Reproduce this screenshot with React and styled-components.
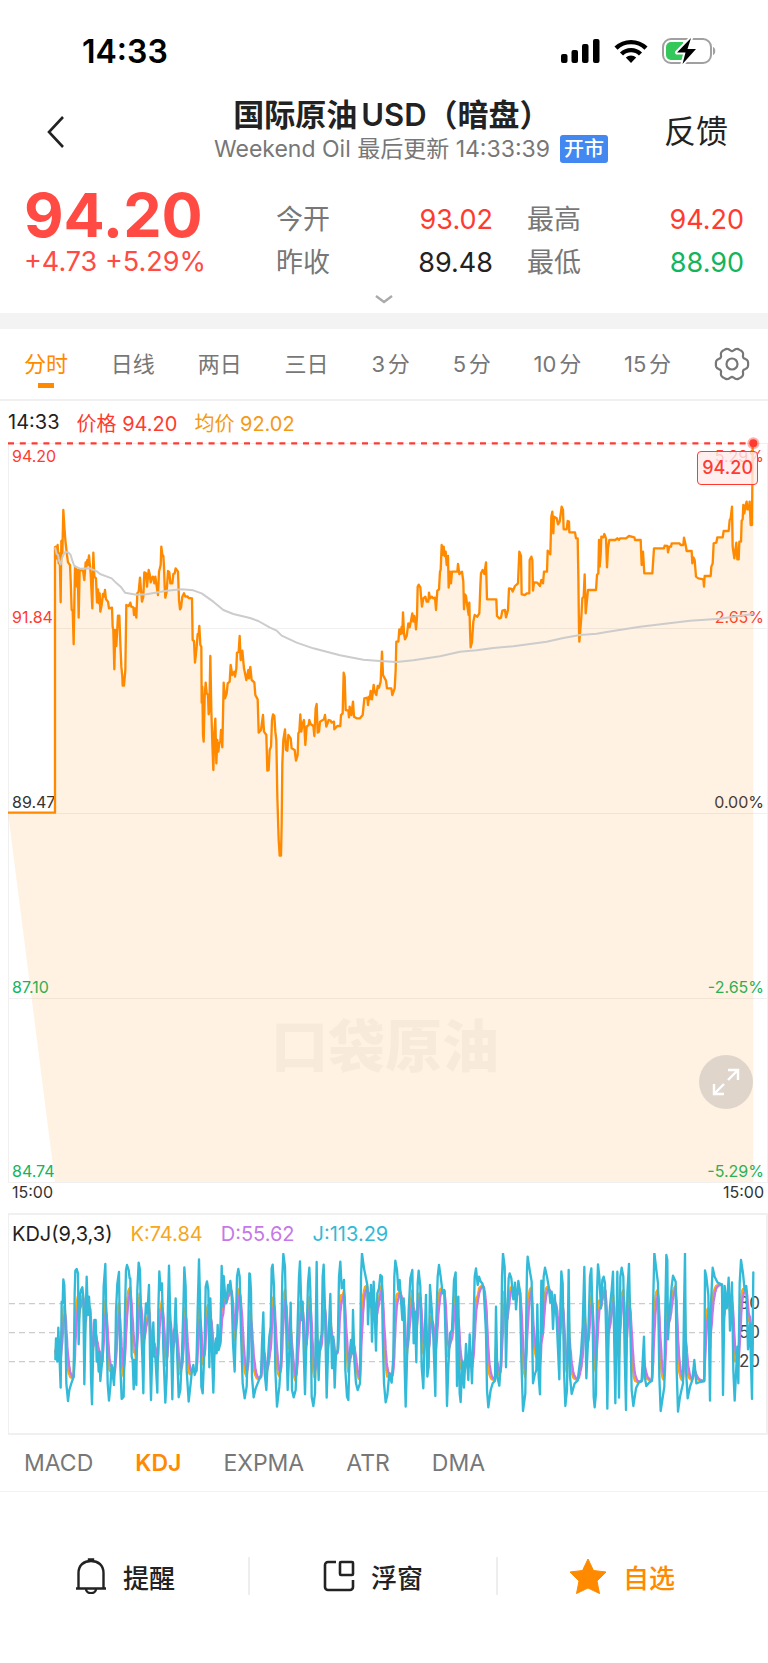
import React from "react";
import styled, { createGlobalStyle } from "styled-components";

const GlobalStyle = createGlobalStyle`
  * {
    box-sizing: border-box;
  }
  body {
    margin: 0;
    background: #fff;
    color: #222;
    font-family: Inter, "Noto Sans CJK SC", sans-serif;
    text-autospace: normal;
  }
  button {
    padding: 0;
    border: none;
    background: none;
    color: inherit;
    font: inherit;
    cursor: pointer;
  }
  svg {
    display: block;
  }
`;

const COLORS = {
  red: "#ff3b30",
  price: "#ff4b44",
  green: "#12b45c",
  orange: "#ff8a00",
  gray: "#777",
  dark: "#222",
};

const Page = styled.div`
  display: flex;
  flex-direction: column;
`;

const StatusBar = styled.div`
  display: flex;
  align-items: center;
  justify-content: space-between;
  height: 98px;
  padding: 4px 52px 0 82px;
  color: #000;
  font-size: 32px;
  font-weight: 600;
`;

const StatusIcons = styled.div`
  display: flex;
  align-items: center;
  gap: 14px;
`;

const Header = styled.header`
  display: grid;
  grid-template-columns: 1fr auto 1fr;
  align-items: center;
  padding: 0 40px 8px;
`;

const BackButton = styled.button`
  justify-self: start;
  padding: 4px;
`;

const Feedback = styled.button`
  justify-self: end;
  font-size: 32px;
  line-height: 40px;
`;

const Heading = styled.div`
  display: flex;
  flex-direction: column;
  align-items: center;
`;

const Title = styled.h1`
  margin: 0;
  padding-left: 16px;
  font-size: 31px;
  font-weight: 600;
  line-height: 34px;
  white-space: nowrap;
`;

const Subtitle = styled.div`
  display: flex;
  align-items: center;
  gap: 10px;
  padding-left: 54px;
  color: ${COLORS.gray};
  font-size: 23px;
  line-height: 34px;
  white-space: nowrap;
`;

const Badge = styled.span`
  padding: 0 4px;
  border-radius: 3px;
  background: #4288f0;
  color: #fff;
  font-size: 20px;
  font-weight: 500;
  line-height: 28px;
`;

const Quote = styled.section`
  display: grid;
  grid-template-columns: 218px 1fr 1fr;
  column-gap: 34px;
  padding: 14px 24px 0;
`;

const Current = styled.div`
  color: ${COLORS.price};
  white-space: nowrap;
`;

const BigPrice = styled.div`
  font-size: 61px;
  font-weight: 700;
  line-height: 54px;
`;

const Change = styled.div`
  font-size: 27px;
  line-height: 40px;
`;

const Stats = styled.dl`
  margin: 10px 0 0;
`;

const Stat = styled.div`
  display: flex;
  justify-content: space-between;
  font-size: 27px;
  line-height: 43px;

  dt {
    color: ${COLORS.gray};
  }
  dd {
    margin: 0;
    color: ${(props) => props.$color};
  }
`;

const MoreButton = styled.button`
  display: flex;
  align-items: center;
  justify-content: center;
  height: 29px;
`;

const Band = styled.div`
  height: 16px;
  background: #f3f3f3;
`;

const Tabs = styled.nav`
  display: flex;
  justify-content: space-between;
  align-items: center;
  height: 72px;
  padding: 0 18px 0 24px;
  border-bottom: 2px solid #f0f0f0;
`;

const Tab = styled.button`
  display: flex;
  flex-direction: column;
  align-items: center;
  color: ${(props) => (props.$active ? COLORS.orange : COLORS.gray)};
  font-size: 22px;
  line-height: 30px;
  white-space: nowrap;

  &::after {
    content: "";
    width: 16px;
    height: 5px;
    margin: 4px 0 -9px;
    background: ${(props) => (props.$active ? COLORS.orange : "transparent")};
  }
`;

const Legend = styled.div`
  display: flex;
  align-items: center;
  gap: 17px;
  height: 42px;
  padding: 0 8px;
  font-size: 20px;
`;

const Value = styled.span`
  color: ${(props) => props.$color};
`;

const Plot = styled.div`
  display: grid;
  height: 740px;
  margin-left: 8px;

  > * {
    grid-area: 1 / 1;
    min-width: 0;
    min-height: 0;
  }
`;

const Curve = styled.svg`
  width: 100%;
  height: 100%;
`;

const Scale = styled.div`
  display: grid;
  grid-template-rows: repeat(4, 1fr);
`;

const ScaleRow = styled.div`
  display: flex;
  flex-direction: column;
  justify-content: flex-end;
  padding: 2px 3px 1px;
  border: 1px solid #f0f0f0;
  border-bottom: none;

  &:last-child {
    border-bottom: 1px solid #f0f0f0;
  }
`;

const Pair = styled.div`
  display: flex;
  justify-content: space-between;
  color: ${(props) => props.$color};
  font-size: 16px;
  line-height: 20px;

  &:not(:last-child) {
    margin-bottom: auto;
  }
`;

const Watermark = styled.div`
  align-self: end;
  justify-self: center;
  margin: 0 6px 100px 0;
  color: rgba(0, 0, 0, 0.03);
  font-size: 57px;
  font-weight: 900;
  line-height: 72px;
`;

const PriceTag = styled.div`
  justify-self: end;
  align-self: start;
  margin: 8px 10px 0 0;
  padding: 0 4px;
  border: 1px solid ${COLORS.red};
  border-radius: 4px;
  background: rgba(255, 235, 235, 0.8);
  color: ${COLORS.red};
  font-size: 18px;
  font-weight: 500;
  line-height: 32px;
`;

const ExpandButton = styled.button`
  display: flex;
  align-items: center;
  justify-content: center;
  align-self: end;
  justify-self: end;
  width: 54px;
  height: 54px;
  margin: 0 15px 74px 0;
  border-radius: 50%;
  background: #e0d5cb;
`;

const TimeAxis = styled.div`
  display: flex;
  justify-content: space-between;
  height: 30px;
  padding: 0 4px 0 12px;
  color: #333;
  font-size: 16px;
  line-height: 18px;
`;

const Indicator = styled.section`
  margin-left: 8px;
  border: 2px solid #f0f0f0;
  border-left-width: 1px;
`;

const IndicatorLegend = styled(Legend)`
  height: 38px;
  padding: 0 3px;
  gap: 18px;
`;

const IndicatorPlot = styled.div`
  display: grid;
  height: 180px;

  > * {
    grid-area: 1 / 1;
    min-height: 0;
  }
`;

const Levels = styled.div`
  display: flex;
  flex-direction: column;
  align-items: flex-end;
  padding: 36px 6px 0 0;
  color: #444;
  font-size: 17px;
  line-height: 29px;
`;

const IndicatorTabs = styled.nav`
  display: flex;
  align-items: center;
  gap: 42px;
  height: 57px;
  padding: 0 24px;
  border-bottom: 1px solid #f3f3f3;
`;

const IndicatorTab = styled.button`
  color: ${(props) => (props.$active ? COLORS.orange : COLORS.gray)};
  font-size: 23px;
  font-weight: ${(props) => (props.$active ? 600 : 400)};
`;

const Actions = styled.footer`
  display: grid;
  grid-template-columns: repeat(3, 1fr);
  padding: 65px 22px 66px 2px;
`;

const Action = styled.button`
  display: flex;
  align-items: center;
  justify-content: center;
  gap: 16px;
  height: 38px;
  color: ${(props) => (props.$starred ? COLORS.orange : COLORS.dark)};
  font-size: 26px;
  font-weight: 500;

  &:not(:last-child) {
    border-right: 2px solid #eee;
  }
`;

// Both charts are stored in a grid of three units per pixel.
const PRICE = `24,1148 165,1148 165,351 168,350 170,385 173,345 176,400 179,370 182,517 184,333 187,370 190,240
193,290 196,330 199,357 201,375 204,397 210,405 212,450 215,540 218,540 221,643 223,520 225,410 229,420 231,470
233,420 236,563 239,420 249,422 253,450 257,397 259,410 262,390 264,405 267,376 270,410 272,430 277,535 280,368
283,440 288,445 291,517 294,478 297,520 299,490 301,545 305,525 309,492 312,500 315,480 318,508 324,515 327,535
336,533 338,590 340,600 343,718 346,600 349,648 354,557 358,557 361,640 364,710 367,740 368,767 372,767 376,720
379,525 386,528 391,518 394,530 400,532 402,555 405,535 409,563 412,490 416,485 420,443 423,480 426,515 430,500
433,427 438,430 441,470 446,420 449,432 452,457 458,440 461,443 463,460 466,440 469,462 474,495 477,425 482,405
484,350 487,375 490,377 492,410 494,470 496,503 500,485 504,423 508,427 511,460 517,460 520,432 524,430 527,415
534,425 537,510 540,538 543,533 547,500 552,490 556,500 562,499 566,504 576,505 578,630 582,633 585,698 590,650
593,612 596,610 598,588 601,645 604,650 605,818 607,770 609,915 611,935 614,800 617,758 620,790 624,795 626,853
628,840 631,678 634,840 637,940 640,1020 643,910 646,866 649,1000 652,930 655,965 658,940 661,935 663,900
667,952 671,758 675,805 680,790 683,760 689,755 692,705 697,735 703,725 705,740 709,715 711,668 716,665 719,618
722,690 727,662 732,715 739,750 745,720 747,745 751,711 755,750 763,757 766,795 773,808 776,908 783,900 789,855
792,905 799,915 802,1022 806,1020 809,960 813,950 816,870 819,853 823,858 826,905 829,930 832,1100 836,1230
839,1277 843,1277 845,1180 847,1000 850,930 855,898 858,960 862,962 865,915 872,925 875,955 884,960 888,992
893,975 895,910 898,905 901,853 904,905 908,880 912,870 916,945 920,890 926,885 928,870 932,882 940,888 943,918
947,835 950,822 953,908 957,905 960,875 972,868 975,855 979,890 986,870 992,872 995,878 1002,875 1003,898
1012,888 1021,888 1023,855 1028,850 1031,728 1034,740 1037,840 1045,842 1047,862 1049,830 1054,855 1059,815
1062,860 1070,865 1080,865 1088,855 1090,835 1093,805 1102,803 1104,825 1107,800 1109,808 1112,783 1116,808
1121,765 1124,785 1129,795 1133,768 1137,773 1142,755 1144,710 1146,665 1149,735 1158,752 1161,775 1174,775
1177,795 1184,775 1187,720 1189,635 1195,635 1198,598 1202,612 1205,590 1207,610 1209,547 1212,610 1215,628
1220,618 1225,580 1229,592 1233,572 1237,550 1240,575 1243,558 1246,575 1248,598 1251,560 1253,470 1256,464
1261,472 1264,510 1266,530 1270,505 1276,500 1280,515 1285,515 1287,488 1290,505 1295,500 1300,505 1305,503
1308,540 1312,482 1317,478 1320,425 1322,420 1325,345 1328,375 1331,350 1334,378 1337,365 1340,405 1344,378
1346,473 1350,425 1353,460 1356,425 1372,425 1374,402 1378,432 1386,425 1390,455 1392,538 1395,493 1398,498
1402,530 1406,555 1408,518 1410,600 1412,652 1416,635 1420,575 1424,555 1432,560 1438,550 1441,470 1443,430
1448,420 1453,432 1458,397 1461,508 1489,508 1491,558 1498,565 1503,563 1507,542 1515,540 1518,562 1524,540
1527,475 1535,477 1538,485 1545,468 1554,460 1558,365 1563,378 1565,493 1575,495 1580,490 1588,490 1589,390
1594,380 1597,390 1599,482 1602,457 1612,458 1620,468 1624,450 1629,460 1632,425 1641,425 1643,362 1651,373
1654,260 1657,245 1660,310 1662,260 1670,265 1674,283 1679,275 1685,230 1689,240 1691,298 1700,298 1703,273
1707,275 1708,307 1725,307 1728,325 1733,325 1735,435 1737,600 1738,635 1741,600 1744,560 1747,505 1751,500
1754,433 1757,550 1761,510 1764,480 1788,480 1791,435 1795,430 1797,330 1799,410 1802,375 1804,320 1810,322
1813,312 1818,325 1821,412 1824,355 1828,330 1846,330 1852,325 1857,330 1860,325 1878,325 1887,318 1903,322
1905,330 1922,330 1925,405 1929,365 1933,430 1957,430 1962,355 1992,355 1994,347 2002,348 2004,367 2008,350
2013,350 2015,340 2038,340 2042,345 2050,345 2052,323 2057,345 2060,363 2075,363 2077,400 2080,382 2084,390
2088,440 2095,445 2110,448 2112,470 2114,438 2132,438 2134,410 2138,400 2141,340 2149,338 2152,322 2168,322
2171,303 2186,303 2189,270 2192,265 2196,230 2198,350 2203,385 2209,338 2212,388 2216,388 2218,335 2223,335
2225,272 2228,268 2230,225 2233,250 2236,230 2240,215 2242,238 2246,238 2249,215 2252,285 2256,285 2258,40`;

const AVERAGE = `165,352 170,372 174,375 178,395 182,403 187,382 194,367 205,367 212,375 218,395 223,408 240,416
270,415 290,424 300,432 335,445 350,460 362,470 375,488 410,494 440,493 500,482 545,478 580,481 605,490 640,515
670,540 700,552 750,564 775,573 810,593 830,602 845,617 890,638 940,655 1020,676 1090,689 1140,693 1190,696
1240,691 1320,679 1380,665 1430,661 1480,654 1540,649 1640,635 1690,624 1740,615 1790,611 1820,606 1920,590
2020,578 2070,572 2160,566 2220,557 2260,552`;

const J_LINE = `166,448 168,385 172,455 175,353 178,430 182,533 185,275 188,280 190,208 193,225 196,330 199,520
204,573 208,540 214,520 221,500 224,250 226,182 230,177 234,190 236,403 240,260 243,240 247,232 250,260 253,523
257,320 260,200 264,315 267,260 271,330 273,500 276,583 280,400 283,330 287,330 290,455 293,425 296,485 298,425
301,513 305,470 307,455 311,230 316,162 320,370 323,520 327,572 331,530 335,465 342,525 346,430 348,303 352,221
357,186 361,470 365,567 371,560 375,300 378,180 381,165 386,180 389,205 391,205 395,440 398,450 401,538 404,450
409,525 412,240 416,158 420,180 424,370 427,440 430,550 433,370 438,280 442,310 447,225 450,440 453,570 457,420
460,337 463,440 466,440 472,548 475,300 478,184 482,240 486,220 490,420 496,578 500,500 504,280 507,167 511,330
514,430 517,568 521,370 524,350 527,265 531,420 536,562 541,540 546,430 550,300 553,172 557,230 560,480 566,575
572,520 576,480 580,465 584,495 589,480 593,300 597,148 601,300 604,530 608,550 614,400 617,230 621,214 625,240
628,472 631,265 636,430 640,548 644,410 648,385 650,430 653,345 656,420 660,405 663,280 665,168 669,290 671,198
675,250 679,280 684,225 687,245 691,213 695,250 699,400 704,485 708,330 711,200 715,177 719,200 723,370 728,520
734,565 740,530 744,400 748,190 750,192 753,245 756,500 761,562 767,535 775,515 783,495 786,400 790,307 794,490
799,540 803,460 808,380 812,350 815,175 818,164 822,230 826,480 831,590 838,530 843,450 847,200 850,132 855,170
859,370 863,540 868,420 872,278 876,540 881,562 887,540 893,340 897,200 900,154 905,330 908,275 911,420 915,553
919,400 924,220 928,173 931,240 935,560 940,588 945,550 948,300 950,156 953,420 956,510 960,400 965,370 968,200
971,164 975,300 980,563 985,400 991,252 996,475 1000,380 1004,533 1008,430 1013,420 1017,200 1021,155 1025,235
1029,230 1032,210 1036,480 1041,560 1045,570 1049,430 1053,390 1057,430 1059,300 1063,450 1068,520 1073,540
1080,520 1083,200 1086,130 1092,175 1098,205 1102,225 1104,343 1108,250 1110,290 1113,225 1116,395 1121,215
1128,422 1132,250 1137,235 1141,195 1146,200 1148,370 1152,520 1157,577 1162,555 1168,490 1175,518 1180,440
1183,200 1186,152 1191,180 1195,240 1199,210 1203,270 1207,330 1211,265 1214,470 1217,590 1221,450 1226,300
1231,205 1237,180 1241,400 1245,305 1249,457 1253,220 1256,182 1261,230 1265,470 1270,535 1274,380 1278,255
1282,500 1286,470 1290,225 1295,295 1300,380 1306,558 1309,330 1313,200 1317,165 1322,200 1328,250 1333,240
1338,440 1341,588 1345,470 1350,370 1356,360 1362,210 1367,187 1371,528 1375,260 1379,550 1382,576 1387,455
1392,533 1398,402 1405,510 1409,373 1416,520 1420,380 1424,200 1428,175 1433,225 1437,200 1442,215 1447,220
1451,235 1455,310 1458,370 1461,540 1465,592 1472,540 1478,520 1485,512 1488,290 1492,500 1498,527 1503,450
1506,200 1509,130 1514,170 1518,472 1522,310 1526,205 1529,190 1534,205 1540,268 1545,218 1548,298 1555,213
1560,245 1564,450 1569,603 1576,550 1579,300 1581,180 1583,140 1589,180 1595,215 1597,400 1599,520 1604,495
1609,480 1612,283 1616,500 1620,553 1624,212 1627,370 1631,200 1635,173 1641,200 1647,235 1651,278 1655,245
1659,357 1664,255 1670,330 1678,508 1681,300 1684,184 1688,220 1692,480 1696,588 1701,540 1706,180 1710,500
1715,552 1724,520 1733,512 1737,480 1743,430 1748,350 1753,171 1759,505 1765,370 1770,200 1774,175 1778,330
1781,560 1784,592 1788,550 1791,250 1794,163 1798,200 1803,295 1807,210 1811,200 1815,220 1819,400 1822,596
1826,350 1830,290 1835,240 1839,185 1846,580 1852,185 1857,563 1861,200 1865,173 1870,200 1874,430 1878,600
1882,250 1887,162 1891,350 1895,540 1900,588 1908,535 1916,518 1925,512 1932,380 1935,505 1939,528 1947,518
1956,512 1959,300 1963,128 1969,180 1974,220 1978,500 1982,603 1993,530 1996,300 1999,135 2002,150 2004,388
2009,300 2015,230 2019,197 2027,215 2030,480 2034,605 2040,560 2049,520 2052,300 2055,130 2058,480 2063,565
2070,530 2077,510 2083,450 2089,520 2100,516 2113,513 2115,181 2119,200 2125,255 2130,572 2133,280 2138,173
2144,200 2153,218 2166,224 2169,555 2174,228 2180,295 2186,203 2190,362 2196,217 2200,480 2204,572 2212,410
2215,520 2219,220 2223,150 2229,190 2234,240 2239,228 2244,418 2250,340 2253,460 2256,567 2260,187`;

// J = 3K - 2D and D is a 3-period smoothing of K, so both follow from J.
// One step is one minute of the 24 hour axis.
const smoothLines = (line) => {
  const points = line.split(/\s+/).map((pair) => pair.split(",").map(Number));
  const k = [];
  const d = [];
  let lastD = 420;
  let i = 0;
  for (let x = points[0][0]; x <= 2260; x += 2280 / 1440) {
    while (i < points.length - 2 && points[i + 1][0] < x) i += 1;
    const [x0, y0] = points[i];
    const [x1, y1] = points[i + 1];
    const j = y0 + ((y1 - y0) * (x - x0)) / (x1 - x0);
    const valueK = (3 * j + 4 * lastD) / 7;
    lastD = (2 * lastD + valueK) / 3;
    k.push(`${Math.round(x)},${Math.round(valueK)}`);
    d.push(`${Math.round(x)},${Math.round(lastD)}`);
  }
  return { k: k.join(" "), d: d.join(" ") };
};

const KD = smoothLines(J_LINE);

const GEAR = Array.from({ length: 72 }, (_, i) => {
  const angle = (i * Math.PI) / 36;
  const r = 15 + 1.6 * Math.cos(6 * angle) - 0.5 * Math.cos(12 * angle);
  return `${(18 + r * Math.cos(angle)).toFixed(1)},${(18 + r * Math.sin(angle)).toFixed(1)}`;
}).join(" ");

const PERIODS = ["分时", "日线", "两日", "三日", "3分", "5分", "10分", "15分"];
const INDICATORS = ["MACD", "KDJ", "EXPMA", "ATR", "DMA"];

const SignalIcon = () => (
  <svg width="39" height="24" viewBox="0 0 39 24">
    <rect x="0" y="15" width="6.500" height="9" rx="2" />
    <rect x="10.500" y="11" width="6.500" height="13" rx="2" />
    <rect x="21" y="5" width="6.500" height="19" rx="2" />
    <rect x="32" y="0" width="6.500" height="24" rx="2" />
  </svg>
);

const WifiIcon = () => (
  <svg width="34" height="24" viewBox="0 0 34 24" fill="none" stroke="#000" strokeWidth="4.400">
    <path d="M2 9.200a21.500 21.500 0 0 1 30 0" />
    <path d="M7.500 15a13.500 13.500 0 0 1 19 0" />
    <path d="M17 24l-5.200-5.400a7.500 7.500 0 0 1 10.400 0z" fill="#000" stroke="none" />
  </svg>
);

const BatteryIcon = () => (
  <svg width="54" height="28" viewBox="0 0 54 28">
    <rect x="1" y="2" width="48" height="24" rx="8" fill="#fff" stroke="#a0a0a0" strokeWidth="2" />
    <path d="M9 5h12v18H9a5 5 0 0 1-5-5v-8a5 5 0 0 1 5-5z" fill="#34c759" />
    <path d="M51 10c3 1 3 7 0 8z" fill="#a0a0a0" />
    <path
      d="M29 1L15 15.500h8.500L20.500 27 34 12h-8.500z"
      fill="#000"
      stroke="#fff"
      strokeWidth="4"
      paintOrder="stroke"
      strokeLinejoin="round"
    />
  </svg>
);

const BellIcon = () => (
  <svg width="32" height="36" viewBox="0 0 32 36" fill="none" stroke="#222" strokeWidth="2.400">
    <path d="M3.500 30V15C3.500 7 9 3 16 3s12.500 4 12.500 12v15" />
    <path d="M1 30.500h30M11 31c0 5.500 10 5.500 10 0" />
    <path d="M14 3.500V1.500h4v2" />
  </svg>
);

const FloatIcon = () => (
  <svg width="32" height="32" viewBox="0 0 32 32" fill="none" stroke="#222" strokeWidth="2.600">
    <path d="M13 2H5a3 3 0 0 0-3 3v22a3 3 0 0 0 3 3h22a3 3 0 0 0 3-3v-7" />
    <rect x="17" y="2" width="13" height="13" rx="1" />
  </svg>
);

const StarIcon = () => (
  <svg width="38" height="36" viewBox="0 0 38 36">
    <path
      d="M19 1l5.500 11.500L37 14l-9 9 2.500 12.500L19 30 7.500 35.500 10 23 1 14l12.500-1.500z"
      fill="#ff8a00"
      stroke="#ff8a00"
      strokeLinejoin="round"
    />
  </svg>
);

const PriceChart = () => (
  <Plot>
    <Scale>
      <ScaleRow>
        <Pair $color={COLORS.red}>
          <span>94.20</span>
          <span>5.29%</span>
        </Pair>
        <Pair $color={COLORS.red}>
          <span>91.84</span>
          <span>2.65%</span>
        </Pair>
      </ScaleRow>
      <ScaleRow>
        <Pair $color="#333">
          <span>89.47</span>
          <span>0.00%</span>
        </Pair>
      </ScaleRow>
      <ScaleRow>
        <Pair $color={COLORS.green}>
          <span>87.10</span>
          <span>-2.65%</span>
        </Pair>
      </ScaleRow>
      <ScaleRow>
        <Pair $color={COLORS.green}>
          <span>84.74</span>
          <span>-5.29%</span>
        </Pair>
      </ScaleRow>
    </Scale>
    <Watermark>口袋原油</Watermark>
    <Curve viewBox="24 39 2280 2220" preserveAspectRatio="none" overflow="visible" fill="none" strokeLinejoin="round">
      <polygon points={`${PRICE} 2260,40 2260,2256 165,2256`} fill="#ff8a00" fillOpacity="0.11" />
      <polyline points={PRICE} stroke="#ff8a00" strokeWidth="7" />
      <polyline points={AVERAGE} stroke="#ccc" strokeWidth="6" />
      <path d="M24 40H2256" stroke="#ff3b30" strokeWidth="7" strokeDasharray="18 17.400" />
      <circle cx="2260" cy="40" r="18" fill="#ff3b30" fillOpacity="0.4" />
      <circle cx="2260" cy="40" r="12" fill="#ff3b30" />
    </Curve>
    <PriceTag>94.20</PriceTag>
    <ExpandButton aria-label="全屏">
      <svg width="28" height="28" viewBox="0 0 28 28" fill="none" stroke="#fff" strokeWidth="2.400">
        <path d="M16 2h10v10M26 2L16 12M12 26H2V16M2 26l10-10" />
      </svg>
    </ExpandButton>
  </Plot>
);

const KdjChart = () => (
  <Indicator>
    <IndicatorLegend>
      <span>KDJ(9,3,3)</span>
      <Value $color="#f5a623">K:74.84</Value>
      <Value $color="#c678e8">D:55.62</Value>
      <Value $color="#32b9d5">J:113.29</Value>
    </IndicatorLegend>
    <IndicatorPlot>
      <Levels>
        <span>80</span>
        <span>50</span>
        <span>20</span>
      </Levels>
      <Curve
        viewBox="27 129 2271 540"
        preserveAspectRatio="none"
        fill="none"
        strokeLinejoin="round"
        strokeLinecap="round"
      >
        <path
          d="M27 281H2160M27 368H2160M27 455H2160"
          stroke="#ccc"
          strokeWidth="4"
          strokeDasharray="18 12"
          strokeLinecap="butt"
        />
        <polyline points={KD.k} stroke="#ffa510" strokeWidth="7" />
        <polyline points={KD.d} stroke="#c678e8" strokeWidth="7" />
        <polyline points={J_LINE} stroke="#32bad8" strokeWidth="7" />
      </Curve>
    </IndicatorPlot>
  </Indicator>
);

const App = () => {
  return (
    <Page>
      <GlobalStyle />
      <StatusBar>
        <span>14:33</span>
        <StatusIcons>
          <SignalIcon />
          <WifiIcon />
          <BatteryIcon />
        </StatusIcons>
      </StatusBar>
      <Header>
        <BackButton aria-label="返回">
          <svg width="24" height="34" viewBox="0 0 24 34" fill="none" stroke="#222" strokeWidth="2.600">
            <path d="M19 2L5 17l14 15" />
          </svg>
        </BackButton>
        <Heading>
          <Title>国际原油USD（暗盘）</Title>
          <Subtitle>
            Weekend Oil 最后更新 14:33:39
            <Badge>开市</Badge>
          </Subtitle>
        </Heading>
        <Feedback>反馈</Feedback>
      </Header>
      <Quote>
        <Current>
          <BigPrice>94.20</BigPrice>
          <Change>+4.73 +5.29%</Change>
        </Current>
        <Stats>
          <Stat $color={COLORS.red}>
            <dt>今开</dt>
            <dd>93.02</dd>
          </Stat>
          <Stat $color={COLORS.dark}>
            <dt>昨收</dt>
            <dd>89.48</dd>
          </Stat>
        </Stats>
        <Stats>
          <Stat $color={COLORS.red}>
            <dt>最高</dt>
            <dd>94.20</dd>
          </Stat>
          <Stat $color={COLORS.green}>
            <dt>最低</dt>
            <dd>88.90</dd>
          </Stat>
        </Stats>
      </Quote>
      <MoreButton aria-label="展开">
        <svg width="18" height="10" viewBox="0 0 18 10" fill="none" stroke="#aaa" strokeWidth="2.400">
          <path d="M1 2l8 6 8-6" />
        </svg>
      </MoreButton>
      <Band />
      <Tabs>
        {PERIODS.map((label, index) => (
          <Tab key={label} $active={index === 0}>
            <span>{label}</span>
          </Tab>
        ))}
        <button aria-label="设置">
          <svg width="36" height="36" viewBox="0 0 36 36" fill="none" stroke="#777" strokeWidth="2.200">
            <polygon points={GEAR} strokeLinejoin="round" />
            <circle cx="18" cy="18" r="5.500" />
          </svg>
        </button>
      </Tabs>
      <Legend>
        <span>14:33</span>
        <Value $color={COLORS.red}>价格 94.20</Value>
        <Value $color="#f59a12">均价 92.02</Value>
      </Legend>
      <PriceChart />
      <TimeAxis>
        <span>15:00</span>
        <span>15:00</span>
      </TimeAxis>
      <KdjChart />
      <IndicatorTabs>
        {INDICATORS.map((name) => (
          <IndicatorTab key={name} $active={name === "KDJ"}>
            {name}
          </IndicatorTab>
        ))}
      </IndicatorTabs>
      <Actions>
        <Action>
          <BellIcon />
          提醒
        </Action>
        <Action>
          <FloatIcon />
          浮窗
        </Action>
        <Action $starred>
          <StarIcon />
          自选
        </Action>
      </Actions>
    </Page>
  );
};

export default App;
